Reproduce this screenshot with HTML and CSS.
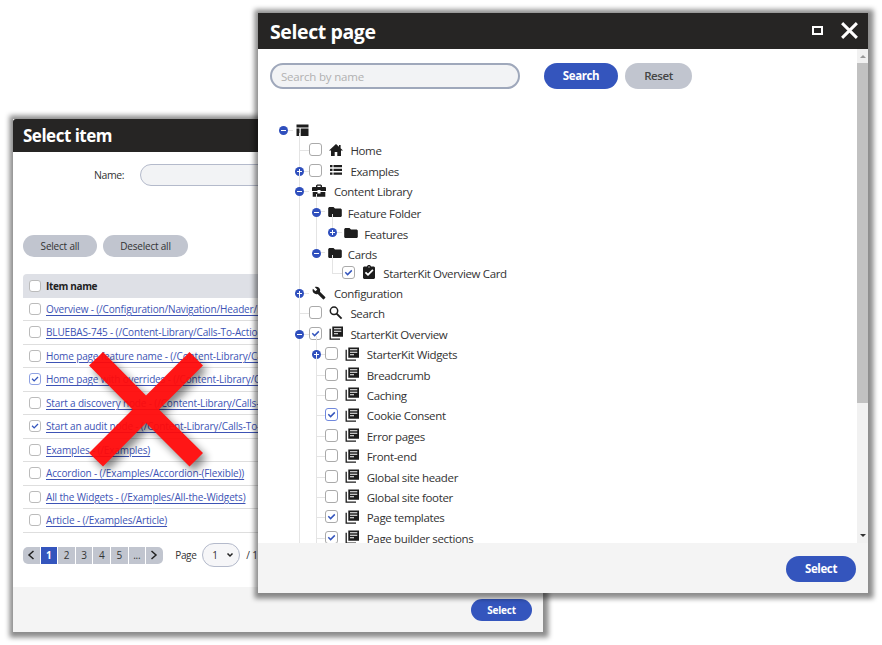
FILE: index.html
```html
<!DOCTYPE html>
<html lang="en">
<head>
<meta charset="utf-8">
<title>Select page</title>
<link rel="stylesheet" href="styles.css">
</head>
<body>
<svg class="defs" width="0" height="0">
  <symbol id="template" viewBox="0 0 14 14"><path d="M.5 1.500h12v3H.5zM.5 5.500h3V13h-3zM4.700 5.500h7.800V13H4.700z"/></symbol>
  <symbol id="home" viewBox="0 0 14 14"><path d="M7 1 0 7.500h2V13h3.700V9h2.600v4H12V7.500h2L11.600 5.200V2H10v1.700z"/></symbol>
  <symbol id="list" viewBox="0 0 14 14"><path d="M1 2h2.500v2.300H1zM4.500 2H13v2.300H4.500zM1 5.700h2.500V8H1zM4.500 5.700H13V8H4.500zM1 9.400h2.500v2.300H1zM4.500 9.400H13v2.300H4.500z"/></symbol>
  <symbol id="case" viewBox="0 0 14 14"><path fill-rule="evenodd" d="M4 3V1.500L5.200.4h3.600L10 1.500V3h3.400l.6.700V7H8.500V6h-3v1H0V3.700L.6 3zm1.400 0h3.200V1.700H5.400zM.7 8.100h4.800v1.300h3V8.100h4.800v4.700H.7z"/></symbol>
  <symbol id="folder" viewBox="0 0 14 12"><path d="M1.200 1H5.500L7 2.500h5.800l1 1V10l-.8 1H1l-.8-1V2z"/></symbol>
  <symbol id="task" viewBox="0 0 14 14"><path fill-rule="evenodd" d="M2 1.500h3C5.200.500 6 0 7 0s1.800.500 2 1.500h3l1 1V13l-1 1H2l-1-1V2.500zM6 11l5.500-5.500-1.200-1.200L6 8.600 4 6.700 2.800 7.900zM6.400 1.500v1.100h1.200V1.500z"/></symbol>
  <symbol id="wrench" viewBox="0 0 24 24"><path d="M22.700 19l-9.100-9.100c.9-2.300.4-5-1.500-6.900-2-2-5-2.400-7.400-1.300L9 6 6 9 1.600 4.700C.4 7.100.9 10.100 2.900 12.100c1.900 1.900 4.600 2.400 6.900 1.500l9.100 9.100c.4.4 1 .4 1.400 0l2.300-2.300c.5-.4.5-1.100.1-1.400z"/></symbol>
  <symbol id="search" viewBox="0 0 14 14"><circle cx="5" cy="4.800" r="3.700" fill="none" stroke="currentColor" stroke-width="1.500"/><path d="m7.600 7.600 5 5" stroke="currentColor" stroke-width="1.800"/></symbol>
  <symbol id="pages" viewBox="0 0 14 14"><path fill-rule="evenodd" d="M3.300.5H14v10.300H3.300zM5 2.300v1h7.300v-1zM5 4.800v1h7.300v-1zM5 7.300v1h4v-1z"/><path d="M1.200 2.800v10.300H11" fill="none" stroke="currentColor" stroke-width="1.300"/></symbol>
  <symbol id="check" viewBox="0 0 12 12"><path d="m2.500 5.800 2.500 2.500L9.600 3.700" fill="none" stroke="#3455bd" stroke-width="1.600"/></symbol>
</svg>

<section class="dialog items">
  <header class="bar"><h1>Select item</h1></header>
  <div class="filter"><label>Name:</label><span class="field"></span></div>
  <div class="bulk"><button>Select all</button><button>Deselect all</button></div>
  <div class="table">
    <div class="line head"><i class="box"></i><b>Item name</b></div>
    <div class="line"><i class="box"></i><a>Overview - (/Configuration/Navigation/Header/Main)</a></div>
    <div class="line"><i class="box"></i><a>BLUEBAS-745 - (/Content-Library/Calls-To-Action)</a></div>
    <div class="line"><i class="box"></i><a>Home page feature name - (/Content-Library/Calls)</a></div>
    <div class="line"><i class="box focus"><svg><use href="#check"/></svg></i><a>Home page with overrides - (/Content-Library/Calls)</a></div>
    <div class="line"><i class="box"></i><a>Start a discovery node - (/Content-Library/Calls-To-Action)</a></div>
    <div class="line"><i class="box"><svg><use href="#check"/></svg></i><a>Start an audit node - (/Content-Library/Calls-To-Action)</a></div>
    <div class="line"><i class="box"></i><a>Examples - (/Examples)</a></div>
    <div class="line"><i class="box"></i><a>Accordion - (/Examples/Accordion-(Flexible))</a></div>
    <div class="line"><i class="box"></i><a>All the Widgets - (/Examples/All-the-Widgets)</a></div>
    <div class="line"><i class="box"></i><a>Article - (/Examples/Article)</a></div>
  </div>
  <div class="paging">
    <div class="pager">
      <span><svg viewBox="0 0 8 10"><path d="M6.500 1 2 5l4.500 4"/></svg></span><span class="on">1</span><span>2</span><span>3</span><span>4</span><span>5</span><span>...</span><span><svg viewBox="0 0 8 10"><path d="M1.500 1 6 5 1.500 9"/></svg></span>
    </div>
    <span class="page">Page</span>
    <span class="select">1<svg viewBox="0 0 8 6"><path d="m1.500 1.500 2.500 2.500 2.500-2.500"/></svg></span>
    <span class="total">/ 1</span>
  </div>
  <footer><button class="primary">Select</button></footer>
</section>

<svg class="cross" viewBox="0 0 114 115"><path d="M14 0 57 43.500 100.500 0 114 13.500 70 57.500l44 43.500-13.500 13.500L57 71 14 114.500 0 101l43.500-43.500L0 13.500z"/></svg>

<section class="dialog pages">
  <header class="bar"><h1>Select page</h1><i class="maximize"></i><svg class="close" viewBox="0 0 18 18"><path d="m2 2 14 14M16 2 2 16"/></svg></header>
  <div class="body">
    <div class="content">
      <div class="searchbar"><span class="field">Search by name</span><button class="primary">Search</button><button>Reset</button></div>
      <ul class="tree" id="tree"></ul>
    </div>
    <div class="scroll"><i class="up"></i><i class="thumb"></i><i class="down"></i></div>
  </div>
  <footer><button class="primary">Select</button></footer>
</section>
<script src="tree.js"></script>
</body>
</html>
```
FILE: styles.css
```css
* { box-sizing: border-box; }
body { margin: 0; width: 882px; height: 645px; overflow: hidden; position: relative; background: #fff; color: #333; font-family: "Open Sans", "Noto Sans", sans-serif; }
.defs { position: absolute; }
svg { fill: currentColor; flex: none; }
h1 { margin: 0; color: #fff; font-weight: 700; }
.dialog { position: absolute; display: flex; flex-direction: column; background: #fff; box-shadow: .5px .5px 5px 5px rgba(0,0,0,.46); }
.items { left: 13px; top: 119px; width: 530px; height: 513px; font-size: 10px; letter-spacing: -.14px; }
.pages { left: 258px; top: 13px; width: 610px; height: 580px; font-size: 11.500px; letter-spacing: -.35px; }
.bar { display: flex; align-items: center; flex: none; background: #262524; }
.items .bar { height: 33px; padding-left: 10px; border-radius: 3px 3px 0 0; }
.pages .bar { height: 36px; padding: 0 9px 0 12px; }
.items h1 { font-size: 17px; letter-spacing: -.5px; }
.pages h1 { font-size: 19.500px; letter-spacing: -.4px; flex: 1; }
.maximize { width: 11px; height: 9px; border: 2px solid #fff; margin: -2px 17px 0 0; }
.close { width: 19px; height: 19px; margin-top: -2px; fill: none; stroke: #fff; stroke-width: 2.800; }
button { font: 600 10px "Open Sans", sans-serif; letter-spacing: -.2px; border: 0; padding: 0; background: #c1c5cf; color: #454545; border-radius: 14px; height: 22px; flex: none; }
.primary { background: #3455bd; color: #fff; font-weight: 700; }
.pages button { font-size: 11.500px; letter-spacing: -.4px; height: 26px; width: 67px; }
footer { flex: none; display: flex; align-items: center; justify-content: flex-end; background: #f4f4f4; margin-top: auto; }
.items footer { height: 45px; padding-right: 11px; }
.items footer button { width: 61px; }
.pages footer { height: 50px; padding: 1px 12px 0 0; }
.pages footer button { width: 70px; }
.field { background: #f2f3f5; border: 1px solid #b4bacb; border-radius: 14px; }

.filter { display: flex; align-items: center; height: 46px; flex: none; padding-left: 81px; }
.filter label { width: 46px; font-size: 10.500px; letter-spacing: -.4px; }
.filter .field { width: 300px; height: 22px; }
.bulk { display: flex; gap: 6px; margin: 37px 0 17px 10px; flex: none; }
.bulk button { width: 74px; font-weight: 400; color: #333; }
.bulk button + button { width: 85px; }
.table { margin-left: 10px; width: 510px; flex: none; }
.line { display: flex; align-items: center; height: 23.500px; padding-left: 6px; gap: 5px; border-bottom: 1px solid #dedede; white-space: nowrap; }
.head { background: #dee0e6; border: 0; border-radius: 4px 4px 0 0; color: #222; letter-spacing: -.35px; }
a { color: #3d53b5; text-decoration: underline; text-underline-offset: 1.500px; }
.box { display: block; flex: none; border: 1px solid #bbb; border-radius: 3px; background: #fff; }
.box svg { display: block; width: 100%; height: 100%; }
.items .box { width: 12px; height: 12px; }
.items .focus { border-color: #90a2e2; }
.paging { display: flex; align-items: center; height: 24px; margin: 10.500px 0 0 10px; }
.pager { display: flex; gap: 1px; height: 17px; border-radius: 5px; overflow: hidden; }
.pager span { width: 16.600px; display: flex; align-items: center; justify-content: center; background: #c1c5cf; }
.pager .on { background: #3455bd; color: #fff; font-weight: 700; }
.pager svg, .select svg { fill: none; stroke: #222; stroke-width: 1.500; width: 8px; height: 10px; }
.page { width: 27px; margin-left: 12.500px; letter-spacing: -.35px; }
.select { width: 38px; height: 24px; border: 1px solid #b4bacb; border-radius: 12px; background: #f6f6f8; display: flex; align-items: center; justify-content: space-between; padding: 0 5px 0 9px; }
.total { margin-left: 6px; }
.cross { position: absolute; left: 89px; top: 352px; width: 114px; height: 115px; fill: #ff0a0a; opacity: .95; overflow: visible; filter: drop-shadow(4px 5px 4px rgba(0,0,0,.5)); }

.body { display: flex; height: 494px; overflow: hidden; }
.content { flex: 1; min-width: 0; }
.searchbar { display: flex; align-items: center; height: 53px; padding-left: 12px; }
.searchbar .field { width: 250px; height: 26px; line-height: 23px; padding-left: 9px; color: #b1b1b1; letter-spacing: -.2px; border: 2px solid #9fa8bb; margin-right: 24px; }
.searchbar .primary { width: 74px; margin-right: 7px; }
.tree, .tree ul { list-style: none; margin: 0; padding: 0; }
.tree { margin: 18.200px 0 0 17px; }
.tree ul { margin-left: 16.400px; }
.tree li { position: relative; }
.tree ul > li::before { content: ""; position: absolute; left: 8px; top: -8px; bottom: 8px; width: 1px; background: #e4e4e4; }
.tree ul > li:last-child:not(.more)::before { bottom: auto; height: 19px; }
.tree ul > li.more::before { bottom: -10px; }
.row { position: relative; display: flex; align-items: center; height: 20.400px; white-space: nowrap; }
.row::before { content: ""; flex: none; width: 9.500px; height: 1px; margin-left: 8px; background: #e4e4e4; }
.row .box { width: 13px; height: 13px; margin: -2px 7px 0 0; border: 1.500px solid #aaa; }
.row .focus { border-color: #7088dd; }
.row .pic { width: 14px; height: 14px; margin: -2px 7.500px 0 0; color: #1d1d1d; }
.row.plain::before { margin-right: 3.500px; }
.row.plain .pic { margin-top: -1px; }
.row.dir::before { margin-right: 2.500px; }
.row.dir .pic { margin: 1px 6px 0 0; height: 12px; }
.row.dir span { padding-top: 3.500px; }
.knob { position: absolute; left: 4px; top: 6px; width: 9px; height: 9px; border-radius: 50%; background: #2f4fbd; }
.knob::before, .knob.plus::after { content: ""; position: absolute; left: 2px; top: 4px; width: 5px; height: 1px; background: #fff; }
.knob.plus::after { transform: rotate(90deg); }
.scroll { width: 11px; background: #f1f1f1; display: flex; flex-direction: column; align-items: center; padding: 6px 0 6px; }
.up { border: 3px solid transparent; border-top: 0; border-bottom: 3px solid #999; }
.thumb { width: 11px; height: 340px; background: #c1c1c1; margin: 5px 0 auto; flex: none; }
.down { border: 3px solid transparent; border-bottom: 0; border-top: 3px solid #333; }
```
FILE: tree.js
```js
// [label, icon, checkbox state, knob, children]
const page = (label, check = "off", knob = "") => [label, "pages", check, knob];
const data = [["", "template", "", "minus", [
  ["Home", "home", "off", ""],
  ["Examples", "list", "off", "plus"],
  ["Content Library", "case", "", "minus", [
    ["Feature Folder", "folder", "", "minus", [["Features", "folder", "", "plus"]]],
    ["Cards", "folder", "", "minus", [["StarterKit Overview Card", "task", "on", ""]]]
  ]],
  ["Configuration", "wrench", "", "plus"],
  ["Search", "search", "off", ""],
  ["StarterKit Overview", "pages", "on", "minus", [
    page("StarterKit Widgets", "off", "plus"), page("Breadcrumb"), page("Caching"),
    page("Cookie Consent", "on focus"), page("Error pages"), page("Front-end"),
    page("Global site header"), page("Global site footer"),
    page("Page templates", "on"), page("Page builder sections", "on")
  ]]
]]];
const render = (nodes) => nodes.map(([label, icon, check, knob, kids]) => {
  const kind = icon === "folder" ? "dir" : check ? "" : "plain";
  const more = label === "StarterKit Overview" || label === "Page builder sections" ? "more" : "";
  const box = check ? `<i class="box ${check}">${check.startsWith("on") ? '<svg><use href="#check"/></svg>' : ""}</i>` : "";
  return `<li class="${more}"><div class="row ${kind}">${knob ? `<i class="knob ${knob}"></i>` : ""}${box}` +
    `<svg class="pic"><use href="#${icon}"/></svg><span>${label}</span></div>${kids ? `<ul>${render(kids)}</ul>` : ""}</li>`;
}).join("");
document.getElementById("tree").innerHTML = render(data);
```
